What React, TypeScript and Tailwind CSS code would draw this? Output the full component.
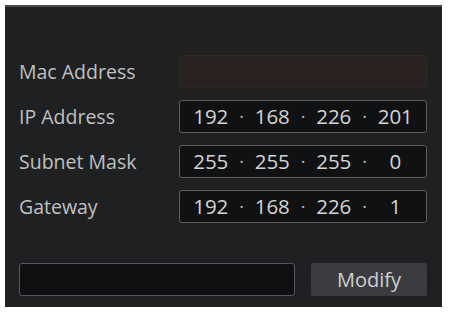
const rows = [
  { label: 'IP Address', parts: ['192', '168', '226', '201'] },
  { label: 'Subnet Mask', parts: ['255', '255', '255', '0'] },
  { label: 'Gateway', parts: ['192', '168', '226', '1'] },
]

function IpBox({ parts }: { parts: string[] }) {
  return (
    <div className="flex h-[33px] w-[248px] items-center rounded-[3px] border border-[#5c5d5f] bg-[#101113] text-[20.5px] text-[#d4d4d4]">
      {parts.map((p, i) => (
        <div key={i} className="contents">
          {i > 0 && <span className="flex w-0 justify-center text-[18px] text-[#bdbdbd]">·</span>}
          <span className="flex-1 text-center leading-none">{p}</span>
        </div>
      ))}
    </div>
  )
}

export default function App() {
  return (
    <div className="h-[312px] w-[454px] bg-white pl-[5px] pt-[5px]" style={{ fontFamily: '"Open Sans", "Noto Sans", sans-serif' }}>
      <div className="h-[302px] w-[437px] border-t-2 border-[#4b4c4e] bg-[#1f2022] pl-[14px] pt-[48px]">
        {/* Network fields */}
        <div className="flex flex-col gap-[12px]">
          <div className="flex items-center">
            <span className="w-[160px] text-[19.5px] text-[#bfc0c0]">Mac Address</span>
            <div className="h-[33px] w-[248px] rounded-[3px] border border-[#2d2727] bg-[#2a2121]" />
          </div>
          {rows.map(r => (
            <div key={r.label} className="flex items-center">
              <span className="w-[160px] text-[19.5px] text-[#bfc0c0]">{r.label}</span>
              <IpBox parts={r.parts} />
            </div>
          ))}
        </div>

        {/* Bottom actions */}
        <div className="mt-[40px] flex items-center gap-[16px]">
          <div className="h-[33px] w-[276px] rounded-[3px] border border-[#56575a] bg-[#0f1012]" />
          <button className="h-[33px] w-[116px] rounded-[2px] bg-[#3a3c3f] text-[20px] text-[#cfd0d0]">Modify</button>
        </div>
      </div>
    </div>
  )
}
